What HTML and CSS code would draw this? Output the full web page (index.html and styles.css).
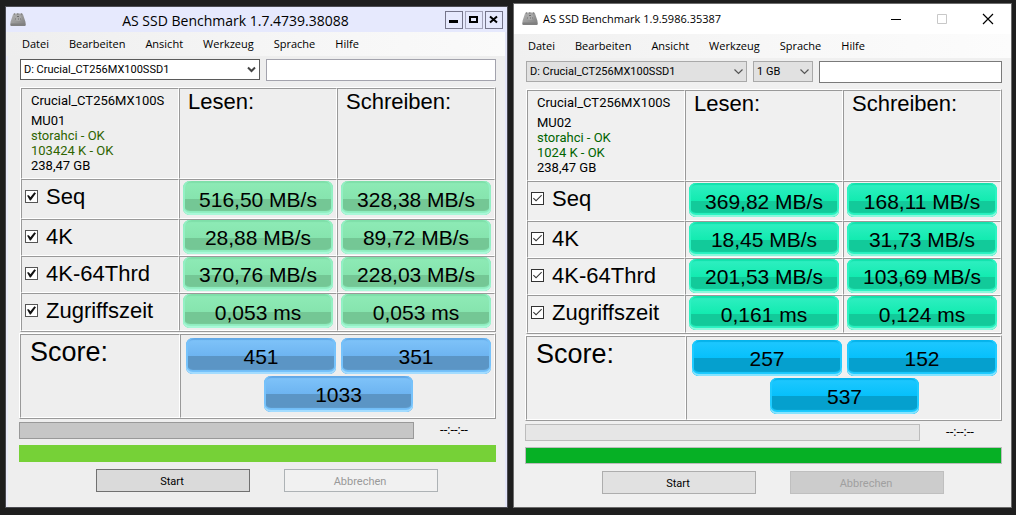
FILE: index.html
```
<!DOCTYPE html>
<html lang="de">
<head>
<meta charset="utf-8">
<title>AS SSD Benchmark</title>
<link rel="stylesheet" href="styles.css">
</head>
<body>
<svg width="0" height="0" class="defs" aria-hidden="true">
  <defs>
    <linearGradient id="metal" x1="0" y1="0" x2="1" y2="1">
      <stop offset="0" stop-color="#b4b4b4"/><stop offset="1" stop-color="#7e7e7e"/>
    </linearGradient>
    <symbol id="drive" viewBox="0 0 16 14">
      <path d="M3 1.500Q3.200 .5 4 .5H12Q12.800 .5 13 1.500L15.500 9V12Q15.500 13 14.500 13H1.500Q.5 13 .5 12V9Z" fill="url(#metal)"/>
      <path d="M.5 10.500H15.500V12Q15.500 13 14.500 13H1.500Q.5 13 .5 12Z" fill="#808080"/>
      <ellipse cx="8" cy="5" rx="3.500" ry="3" fill="#a8a8a8"/>
      <path d="M4 1h1M7 1h1.500M11 1h1M7 3.500h2M5 6h1M8 6h1M10 6h1" stroke="#6c6c6c"/>
    </symbol>
  </defs>
</svg>

<main class="desktop">
  <section class="window win8">
    <header class="titlebar">
      <svg class="app-icon" aria-hidden="true"><use href="#drive"/></svg>
      <h1 class="title">AS SSD Benchmark 1.7.4739.38088</h1>
      <div class="caption">
        <button class="cap-btn" aria-label="Minimieren"><svg width="16" height="16"><path d="M3 9.500h9" stroke="#000" stroke-width="3"/></svg></button>
        <button class="cap-btn dim" aria-label="Maximieren"><svg width="16" height="16"><path d="M4 5h7v5H4z" fill="none" stroke="#000" stroke-width="2"/></svg></button>
        <button class="cap-btn" aria-label="Schließen"><svg width="16" height="16"><path d="M4 4.500l7 6M11 4.500l-7 6" stroke="#000" stroke-width="2"/></svg></button>
      </div>
    </header>
    <nav class="menu">
      <button>Datei</button><button>Bearbeiten</button><button>Ansicht</button><button>Werkzeug</button><button>Sprache</button><button>Hilfe</button>
    </nav>
    <div class="content">
      <div class="controls">
        <div class="combo drive">
          <select aria-label="Laufwerk"><option>D: Crucial_CT256MX100SSD1</option></select>
          <svg class="chev" width="9" height="7" aria-hidden="true"><path d="M1 1.500l3.500 3.500L8 1.500" fill="none" stroke="#444" stroke-width="2"/></svg>
        </div>
        <input class="field" type="text" aria-label="Name">
      </div>

      <table class="results">
        <tr class="head">
          <td class="info"><p class="model">Crucial_CT256MX100S</p><p>MU01</p><p class="ok">storahci - OK</p><p class="ok">103424 K - OK</p><p>238,47 GB</p></td>
          <th scope="col">Lesen:</th>
          <th scope="col">Schreiben:</th>
        </tr>
        <tr class="tall">
          <td><label class="test"><input type="checkbox" checked>Seq</label></td>
          <td><div class="pill">516,50 MB/s</div></td><td><div class="pill">328,38 MB/s</div></td>
        </tr>
        <tr>
          <td><label class="test"><input type="checkbox" checked>4K</label></td>
          <td><div class="pill">28,88 MB/s</div></td><td><div class="pill">89,72 MB/s</div></td>
        </tr>
        <tr>
          <td><label class="test"><input type="checkbox" checked>4K-64Thrd</label></td>
          <td><div class="pill">370,76 MB/s</div></td><td><div class="pill">228,03 MB/s</div></td>
        </tr>
        <tr class="last">
          <td><label class="test"><input type="checkbox" checked>Zugriffszeit</label></td>
          <td><div class="pill">0,053 ms</div></td><td><div class="pill">0,053 ms</div></td>
        </tr>
      </table>

      <div class="score">
        <h2 class="score-label">Score:</h2>
        <div class="score-values">
          <div class="pill blue">451</div><div class="pill blue">351</div>
          <div class="pill blue total">1033</div>
        </div>
      </div>

      <div class="progress-row">
        <div class="bar" role="progressbar" aria-label="Fortschritt"></div>
        <span class="time">--:--:--</span>
      </div>
      <div class="bar full" role="progressbar" aria-label="Gesamt"></div>
      <div class="actions">
        <button class="btn">Start</button>
        <button class="btn" disabled>Abbrechen</button>
      </div>
    </div>
  </section>

  <section class="window win10">
    <header class="titlebar">
      <svg class="app-icon" aria-hidden="true"><use href="#drive"/></svg>
      <h1 class="title">AS SSD Benchmark 1.9.5986.35387</h1>
      <div class="caption">
        <button class="cap-btn" aria-label="Minimieren"><svg width="12" height="12"><path d="M1 6.500h10" stroke="#000"/></svg></button>
        <button class="cap-btn" aria-label="Maximieren" disabled><svg width="12" height="12"><path d="M1.500 1.500h9v9h-9z" fill="none" stroke="#c8c8c8"/></svg></button>
        <button class="cap-btn" aria-label="Schließen"><svg width="12" height="12"><path d="M1 1l10 10M11 1L1 11" stroke="#000" stroke-width="1.200"/></svg></button>
      </div>
    </header>
    <nav class="menu">
      <button>Datei</button><button>Bearbeiten</button><button>Ansicht</button><button>Werkzeug</button><button>Sprache</button><button>Hilfe</button>
    </nav>
    <div class="content">
      <div class="controls">
        <div class="combo drive">
          <select aria-label="Laufwerk"><option>D: Crucial_CT256MX100SSD1</option></select>
          <svg class="chev" width="9" height="7" aria-hidden="true"><path d="M.5 1.500l4 4 4-4" fill="none" stroke="#555" stroke-width="1.200"/></svg>
        </div>
        <div class="combo size">
          <select aria-label="Testgröße"><option>1 GB</option></select>
          <svg class="chev" width="9" height="7" aria-hidden="true"><path d="M.5 1.500l4 4 4-4" fill="none" stroke="#555" stroke-width="1.200"/></svg>
        </div>
        <input class="field" type="text" aria-label="Name">
      </div>

      <table class="results">
        <tr class="head">
          <td class="info"><p class="model">Crucial_CT256MX100S</p><p>MU02</p><p class="ok">storahci - OK</p><p class="ok">1024 K - OK</p><p>238,47 GB</p></td>
          <th scope="col">Lesen:</th>
          <th scope="col">Schreiben:</th>
        </tr>
        <tr class="tall">
          <td><label class="test"><input type="checkbox" checked>Seq</label></td>
          <td><div class="pill">369,82 MB/s</div></td><td><div class="pill">168,11 MB/s</div></td>
        </tr>
        <tr>
          <td><label class="test"><input type="checkbox" checked>4K</label></td>
          <td><div class="pill">18,45 MB/s</div></td><td><div class="pill">31,73 MB/s</div></td>
        </tr>
        <tr>
          <td><label class="test"><input type="checkbox" checked>4K-64Thrd</label></td>
          <td><div class="pill">201,53 MB/s</div></td><td><div class="pill">103,69 MB/s</div></td>
        </tr>
        <tr class="last">
          <td><label class="test"><input type="checkbox" checked>Zugriffszeit</label></td>
          <td><div class="pill">0,161 ms</div></td><td><div class="pill">0,124 ms</div></td>
        </tr>
      </table>

      <div class="score">
        <h2 class="score-label">Score:</h2>
        <div class="score-values">
          <div class="pill blue">257</div><div class="pill blue">152</div>
          <div class="pill blue total">537</div>
        </div>
      </div>

      <div class="progress-row">
        <div class="bar" role="progressbar" aria-label="Fortschritt"></div>
        <span class="time">--:--:--</span>
      </div>
      <div class="bar full" role="progressbar" aria-label="Gesamt"></div>
      <div class="actions">
        <button class="btn">Start</button>
        <button class="btn" disabled>Abbrechen</button>
      </div>
    </div>
  </section>
</main>
</body>
</html>
```
FILE: styles.css
```
*, *::before { box-sizing: border-box; }

body {
  margin: 0;
  background: #1e1e1e;
  color: #000;
  font-family: Roboto, "Liberation Sans", sans-serif;
  font-size: 11px;
}

h1, h2, p { margin: 0; font-weight: normal; }

button, input, select { font: inherit; color: inherit; margin: 0; }

.defs { display: block; }

.desktop {
  display: grid;
  grid-template-columns: 503fr 499fr;
  gap: 5px;
  align-items: end;
  padding: 3px 4px 7px 5px;
}

/* Window frames */
.window { border: 1px solid #4b4b52; min-width: 0; }

.win8 {
  --pill-top: #8eebb6;
  --pill-mid: #86e4ae;
  --pill-low: #74c795;
  --pill-edge: #93f0c4;
  --pill-cap: #7fdfa9;
  --pill-foot: #a9f8d8;
  --blue-top: #80c4fa;
  --blue-mid: #6db4f1;
  --blue-low: #5b95c5;
  --blue-edge: #76c2fb;
  --blue-cap: #62a8e6;
  --blue-foot: #a3dcff;
  --ok: #2f6400;
  background: #eee;
  box-shadow: inset 2px 0 #e9eaf8, inset -2px 0 #e3e5f8;
}

.win10 {
  --pill-top: #31efc2;
  --pill-mid: #12ebb0;
  --pill-low: #12ca9a;
  --pill-edge: #2cf3c2;
  --pill-cap: #12e2ac;
  --pill-foot: #8bf8dc;
  --blue-top: #20c8ff;
  --blue-mid: #06c0fb;
  --blue-low: #05a0ce;
  --blue-edge: #1fcbff;
  --blue-cap: #05b2ea;
  --blue-foot: #85e4ff;
  --ok: #006400;
  background: #f0f0f0;
  border-color: #6c6c6c;
}

/* Title bars */
.titlebar { display: flex; align-items: center; font-family: "Open Sans", "Noto Sans", sans-serif; }
.win8 .titlebar { height: 25px; padding: 0 4px; background: #e6e9fd; }
.win10 .titlebar { height: 30px; padding: 0 0 0 8px; background: #fff; }

.app-icon { width: 16px; height: 14px; flex: none; }

.title { flex: 1; white-space: nowrap; }
.win8 .title { font-size: 14px; line-height: 20px; padding-top: 2px; text-align: center; }
.win10 .title { font-size: 11px; line-height: 16px; padding-left: 5px; }

.caption { display: flex; }
.cap-btn { display: grid; place-items: center; padding: 0; background: none; border: 0; }
.win8 .caption { gap: 2px; }
.win8 .cap-btn { width: 18px; height: 18px; border: 1px solid #75758a; }
.win8 .cap-btn.dim { border-color: #a2a2b8; }
.win10 .cap-btn { width: 46px; height: 28px; }

/* Menu bar */
.menu {
  display: flex;
  gap: 20px;
  height: 24px;
  margin-right: 2px;
  padding-left: 16px;
  background: linear-gradient(90deg, #eee, #f5f5f5 50%, #fafafa);
  font-family: "Open Sans", "Noto Sans", sans-serif;
}
.win10 .menu { padding-left: 14px; margin-right: 0; background: linear-gradient(90deg, #f0f0f0, #f7f7f7 50%, #fcfcfc); }
.menu button { padding: 0; border: 0; background: none; line-height: 24px; }

/* Client area */
.content { padding: 3px 11px 15px 14px; }
.win10 .content { padding: 3px 9px 13px 12px; }

.controls { display: flex; gap: 6px; height: 22px; margin-bottom: 6px; }

.combo { display: grid; height: 21px; flex: none; }
.combo select {
  grid-area: 1 / 1;
  appearance: none;
  width: 100%;
  padding: 0 3px;
  border: 1px solid #5a5a5a;
  border-radius: 0;
  background: #fff;
}
.win10 .combo select { border-color: #a9a9a9; background: #e1e1e1; }
.chev { grid-area: 1 / 1; place-self: center end; margin-right: 4px; pointer-events: none; }
.drive { width: 240px; }
.win10 .drive { width: 221px; }
.size { width: 60px; }
.field { flex: 1; min-width: 0; padding: 0 4px; border: 1px solid #a3a3ad; border-radius: 0; background: #fff; }
.win10 .field { border-color: #7a7a7a; }

/* Result grid */
.results, .score { border: 1px solid; border-color: #fff #999 #999 #fff; }
.results {
  width: 100%;
  table-layout: fixed;
  border-spacing: 0;
  font-family: "Liberation Sans", Arial, sans-serif;
  font-size: 22px;
}
.results td, .results th {
  height: 37px;
  padding: 0 3px;
  border: 1px solid;
  border-color: #999 #fff #fff #999;
  vertical-align: top;
  text-align: left;
  font-weight: normal;
  line-height: 24px;
}
.results .head > * { height: 91px; }
.results .tall > * { height: 40px; }
.results .last > * { height: 38px; }
.results .tall .pill { margin-top: 1px; }
.results th { padding: 1px 8px; }

.results .info {
  padding: 4px 0 0 9px;
  font-family: Roboto, "Liberation Sans", sans-serif;
  font-size: 13px;
  line-height: 15px;
  white-space: nowrap;
}
.model { margin-bottom: 5px; }
.ok { color: var(--ok); }

.test { display: flex; gap: 8px; padding-top: 5px; line-height: 24px; }
.test input {
  appearance: none;
  display: grid;
  place-items: center;
  flex: none;
  width: 13px;
  height: 13px;
  margin-top: 5px;
  border: 1px solid #555;
  background: #fff;
}
.test input:checked::before {
  content: "";
  width: 9px;
  height: 9px;
  background: #111;
  clip-path: polygon(0 40%, 20% 35%, 38% 58%, 82% 2%, 100% 14%, 42% 94%, 32% 94%);
}
.win10 .test input { border-color: #333; }
.win10 .test input:checked::before {
  background: #333;
  clip-path: polygon(0 50%, 8% 42%, 34% 68%, 92% 8%, 100% 16%, 34% 84%);
}

/* Glossy value pills */
.pill {
  height: 34px;
  border-radius: 7px;
  background: linear-gradient(var(--pill-top) 0, var(--pill-mid) 18px, var(--pill-low) 18px);
  box-shadow: inset 0 -2px var(--pill-foot), inset 2px 0 var(--pill-edge), inset -2px 0 var(--pill-edge), inset 0 -4px 1px var(--pill-edge), inset 0 2px 1px var(--pill-cap);
  font-size: 21px;
  line-height: 36px;
  text-align: center;
  white-space: nowrap;
}
.tall .pill, .last .pill { line-height: 38px; }
.pill.blue {
  height: 36px;
  line-height: 38px;
  background: linear-gradient(var(--blue-top) 0, var(--blue-mid) 18px, var(--blue-low) 18px);
  box-shadow: inset 0 -2px var(--blue-foot), inset 2px 0 var(--blue-edge), inset -2px 0 var(--blue-edge), inset 0 -4px 1px var(--blue-edge), inset 0 2px 1px var(--blue-cap);
}

/* Score panel */
.score {
  display: grid;
  grid-template-columns: 160fr 315fr;
  margin: 1px 0 3px -1px;
  font-family: "Liberation Sans", Arial, sans-serif;
}
.score > * { border: 1px solid; border-color: #999 #fff #fff #999; }
.score-label { padding: 2px 9px; font-size: 27px; line-height: 30px; }
.score-values {
  display: grid;
  grid-template-columns: 1fr 1fr;
  gap: 2px 5px;
  padding: 3px 3px 5px 5px;
}
.total { grid-column: 1 / -1; justify-self: center; width: 49%; }

/* Progress and actions */
.progress-row { display: flex; margin-left: -1px; }
.bar { height: 17px; border: 1px solid #999; background: #c6c6c6; }
.progress-row .bar { flex: 1; }
.time { width: 82px; padding-right: 2px; font-size: 13px; line-height: 16px; text-align: center; }
.bar.full { margin: 6px 0 7px -1px; border-color: #76d137; background: #76d137; }
.win10 .bar { border-color: #bcbcbc; background: #e6e6e6; }
.win10 .bar.full { background: #06b025; }

.actions { display: flex; justify-content: center; gap: 34px; padding-left: 18px; }
.btn {
  width: 154px;
  height: 23px;
  padding: 1px 2px 0 0;
  border: 1px solid #707070;
  background: #dadada;
}
.btn:disabled { border-color: #adb2b5; background: #f1f1f1; color: #999; }
.win10 .btn { border-color: #adadad; background: #e1e1e1; }
.win10 .btn:disabled { border-color: #bfbfbf; background: #ccc; color: #a0a0a0; }
```
